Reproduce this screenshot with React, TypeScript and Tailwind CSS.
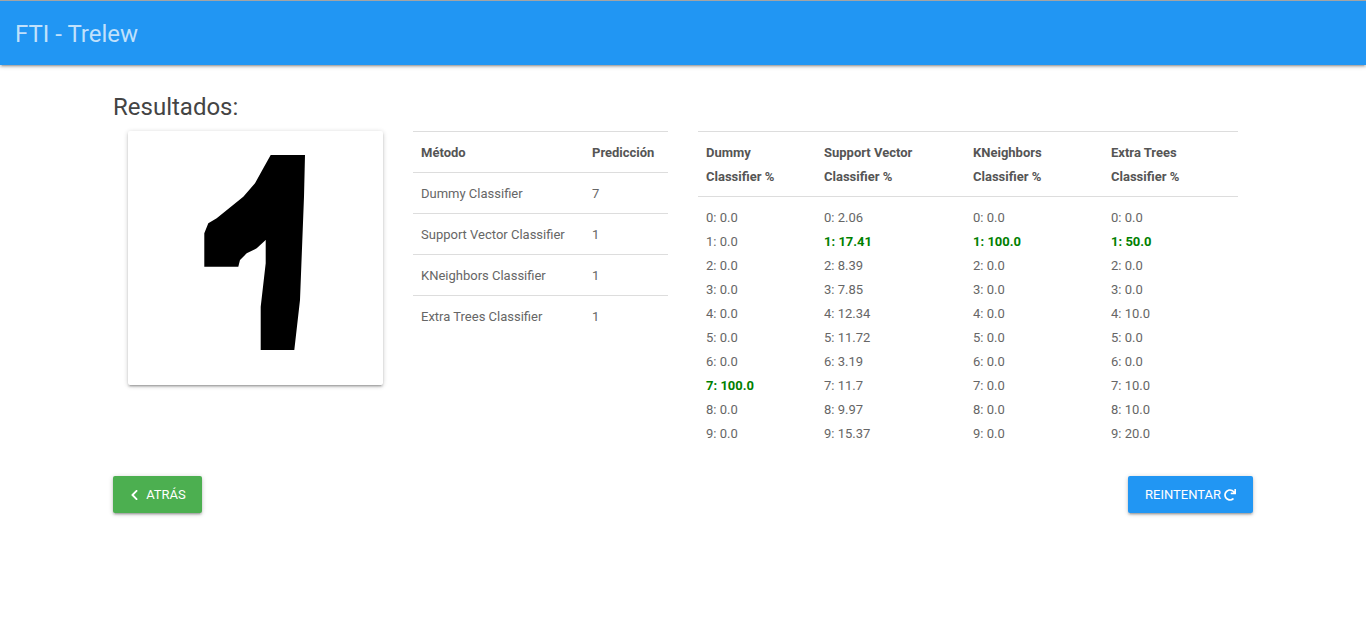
import React from "react";
import { FaChevronLeft, FaRedo } from "react-icons/fa";

const methods = [
  ["Dummy Classifier", "7"],
  ["Support Vector Classifier", "1"],
  ["KNeighbors Classifier", "1"],
  ["Extra Trees Classifier", "1"],
];

const cols: { title: [string, string]; values: string[]; best: number }[] = [
  { title: ["Dummy", "Classifier %"], values: ["0.0", "0.0", "0.0", "0.0", "0.0", "0.0", "0.0", "100.0", "0.0", "0.0"], best: 7 },
  { title: ["Support Vector", "Classifier %"], values: ["2.06", "17.41", "8.39", "7.85", "12.34", "11.72", "3.19", "11.7", "9.97", "15.37"], best: 1 },
  { title: ["KNeighbors", "Classifier %"], values: ["0.0", "100.0", "0.0", "0.0", "0.0", "0.0", "0.0", "0.0", "0.0", "0.0"], best: 1 },
  { title: ["Extra Trees", "Classifier %"], values: ["0.0", "50.0", "0.0", "0.0", "10.0", "0.0", "0.0", "10.0", "10.0", "20.0"], best: 1 },
];

export default function App() {
  return (
    <div className="min-h-[630px] bg-white font-['Roboto','Liberation_Sans',sans-serif] text-[#666]">
      <header className="border-t border-[#a4a4a4] bg-[#2196f3] h-[65px] flex items-center px-[15px] pt-[2px] shadow-[0_2px_2px_0_rgba(0,0,0,0.14),0_3px_1px_-2px_rgba(0,0,0,0.12),0_1px_5px_0_rgba(0,0,0,0.2)]">
        <span className="text-[24px] text-[rgba(255,255,255,0.72)]">FTI - Trelew</span>
      </header>

      <main className="w-[1140px] mx-auto">
        <h2 className="mt-[29px] text-[24px] leading-[26px] text-[#444]">Resultados:</h2>

        <div className="mt-[11px] flex">
          <div className="w-[285px] px-[15px]">
            <div className="w-[255px] h-[254px] bg-white rounded-[2px] shadow-[0_2px_2px_0_rgba(0,0,0,0.14),0_3px_1px_-2px_rgba(0,0,0,0.12),0_1px_5px_0_rgba(0,0,0,0.2)]">
              <svg width="255" height="254" viewBox="0 0 255 254">
                <polygon
                  fill="#000"
                  points="142.7,24 177,24 176,65.7 172,169 166.3,219 132.7,219 132.7,175.7 137.7,132.3 137.7,109 128.7,117.3 118.7,122.3 112,129 110.3,135.7 76.3,135.7 76.3,102.3 80.3,92.3 88.7,87.3 115.3,65.7 127,52.3 135.3,37.3"
                />
              </svg>
            </div>
          </div>

          <div className="w-[285px] px-[15px]">
            <div className="w-[255px] border-t border-[#ddd] text-[13px] leading-[24px]">
              <div className="flex border-b border-[#ddd] font-bold text-[#555]">
                <div className="w-[171px] px-[8px] pt-[9px] pb-[7px]">Método</div>
                <div className="flex-1 px-[8px] pt-[9px] pb-[7px]">Predicción</div>
              </div>
              {methods.map(([m, p], i) => (
                <div key={m} className={`flex ${i < methods.length - 1 ? "border-b border-[#ddd]" : ""}`}>
                  <div className="w-[171px] px-[8px] pt-[9px] pb-[7px]">{m}</div>
                  <div className="flex-1 px-[8px] pt-[9px] pb-[7px]">{p}</div>
                </div>
              ))}
            </div>
          </div>

          <div className="w-[570px] px-[15px]">
            <div className="w-[540px] border-t border-[#ddd] text-[13px] leading-[24px]">
              <div className="grid grid-cols-[118px_149px_138px_135px] border-b border-[#ddd] font-bold text-[#555]">
                {cols.map((c) => (
                  <div key={c.title[0]} className="px-[8px] pt-[9px] pb-[7px]">
                    <div>{c.title[0]}</div>
                    <div>{c.title[1]}</div>
                  </div>
                ))}
              </div>
              <div className="grid grid-cols-[118px_149px_138px_135px]">
                {cols.map((c) => (
                  <div key={c.title[0]} className="px-[8px] pt-[9px] pb-[7px]">
                    {c.values.map((v, i) => (
                      <div key={i} className={i === c.best ? "font-bold text-[#008000]" : ""}>
                        {i}: {v}
                      </div>
                    ))}
                  </div>
                ))}
              </div>
            </div>
          </div>
        </div>

        <div className="mt-[23px] flex justify-between">
          <button className="h-[37px] w-[89px] flex items-center justify-center gap-[6px] rounded-[2px] bg-[#4caf50] text-white text-[13px] shadow-[0_2px_2px_0_rgba(0,0,0,0.14),0_3px_1px_-2px_rgba(0,0,0,0.12),0_1px_5px_0_rgba(0,0,0,0.2)]">
            <FaChevronLeft className="w-[11px] h-[12px]" />
            <span>ATRÁS</span>
          </button>
          <button className="h-[37px] w-[125px] flex items-center justify-center gap-[3px] rounded-[2px] bg-[#2196f3] text-white text-[13px] shadow-[0_2px_2px_0_rgba(0,0,0,0.14),0_3px_1px_-2px_rgba(0,0,0,0.12),0_1px_5px_0_rgba(0,0,0,0.2)]">
            <span>REINTENTAR</span>
            <FaRedo className="w-[12px] h-[12px]" />
          </button>
        </div>
      </main>
    </div>
  );
}
